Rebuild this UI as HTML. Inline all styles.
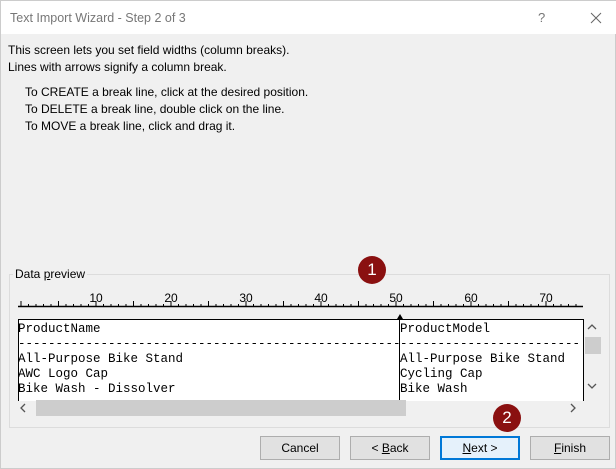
<!DOCTYPE html>
<html><head><style>
body{margin:0;width:616px;height:469px;background:#f0f0f0;font-family:"Liberation Sans",sans-serif;position:relative;overflow:hidden;border:1px solid #ccc;box-sizing:border-box}
.t{position:absolute;font-size:12px;color:#000;white-space:nowrap}
.btn{position:absolute;top:435px;width:78px;height:22px;background:#e1e1e1;border:1px solid #adadad;font-size:12px;text-align:center;line-height:22px}
.mono{position:absolute;font-family:"Liberation Mono",monospace;font-size:12.5px;white-space:pre;line-height:15px}
.c{position:absolute;width:28px;height:28px;border-radius:50%;background:#8a1010;color:#fff;font-size:17px;text-align:center;line-height:28px}
</style></head><body>
<div style="position:absolute;left:0;top:0;width:616px;height:33px;background:#fff"></div>
<div class="t" style="left:9px;top:10px;color:#777;font-size:12.5px">Text Import Wizard - Step 2 of 3</div>
<div class="t" style="left:537px;top:9px;color:#777;font-size:13px">?</div>
<svg style="position:absolute;left:589px;top:11px" width="12" height="12"><path d="M1 1L11 11M11 1L1 11" stroke="#666" stroke-width="1"/></svg>
<div class="t" style="left:7px;top:42px">This screen lets you set field widths (column breaks).</div>
<div class="t" style="left:7px;top:59px">Lines with arrows signify a column break.</div>
<div class="t" style="left:24px;top:84px">To CREATE a break line, click at the desired position.</div>
<div class="t" style="left:24px;top:101px">To DELETE a break line, double click on the line.</div>
<div class="t" style="left:24px;top:118px">To MOVE a break line, click and drag it.</div>
<div style="position:absolute;left:8px;top:273px;width:599px;height:152px;border:1px solid #dcdcdc"></div>
<div class="t" style="left:12px;top:266px;background:#f0f0f0;padding:0 2px">Data <u>p</u>review</div>
<svg style="position:absolute;left:0;top:285px" width="616" height="35">
<line x1="17" y1="20.5" x2="582" y2="20.5" stroke="#000" stroke-width="1.5"/>
<g id="ticks"></g>
<g font-family="Liberation Sans" font-size="12" text-anchor="middle">
<text x="95" y="16">10</text><text x="170" y="16">20</text><text x="245" y="16">30</text><text x="320" y="16">40</text><text x="395" y="16">50</text><text x="470" y="16">60</text><text x="545" y="16">70</text>
</g>
<path d="M399 28L396 33L402 33Z" fill="#000"/>
</svg>
<div style="position:absolute;left:17px;top:318px;width:564px;height:81px;background:#fff;border:1px solid #000;border-bottom:none;overflow:hidden">
<div class="mono" style="left:-1px;top:2px">ProductName
---------------------------------------------------
All-Purpose Bike Stand
AWC Logo Cap
Bike Wash - Dissolver</div>
<div class="mono" style="left:381px;top:2px">ProductModel
------------------------
All-Purpose Bike Stand
Cycling Cap
Bike Wash</div>
<div style="position:absolute;left:380px;top:0;width:1px;height:81px;background:#000"></div>
</div>
<div style="position:absolute;left:583px;top:318px;width:18px;height:81px;background:#f0f0f0"></div>
<div style="position:absolute;left:584px;top:336px;width:16px;height:17px;background:#cdcdcd"></div>
<svg style="position:absolute;left:586px;top:381px" width="10" height="8"><path d="M1 2L5 6L9 2" stroke="#555" fill="none" stroke-width="1.3"/></svg>
<svg style="position:absolute;left:586px;top:322px" width="10" height="8"><path d="M1 6L5 2L9 6" stroke="#555" fill="none" stroke-width="1.3"/></svg>
<div style="position:absolute;left:35px;top:399px;width:370px;height:16px;background:#cdcdcd"></div>
<svg style="position:absolute;left:18px;top:402px" width="8" height="10"><path d="M6 1L2 5L6 9" stroke="#555" fill="none" stroke-width="1.3"/></svg>
<svg style="position:absolute;left:568px;top:402px" width="8" height="10"><path d="M2 1L6 5L2 9" stroke="#555" fill="none" stroke-width="1.3"/></svg>
<div class="btn" style="left:259px">Cancel</div>
<div class="btn" style="left:349px">&lt; <u>B</u>ack</div>
<div class="btn" style="left:439px;border:2px solid #0078d7;width:76px;height:20px;line-height:20px;background:#e5f1fb"><u>N</u>ext &gt;</div>
<div class="btn" style="left:529px"><u>F</u>inish</div>
<div class="c" style="left:357px;top:255px">1</div>
<div class="c" style="left:492px;top:403px">2</div>
<script>
var g=document.getElementById('ticks'),s='';
for(var i=0;i<=75;i++){var x=20+i*7.5;if(x>582)break;var h=(i%5==0)?5:2;s+='<line x1="'+x+'" y1="'+(20-h)+'" x2="'+x+'" y2="20" stroke="#000"/>';}
g.innerHTML=s;
</script>
</body></html>
